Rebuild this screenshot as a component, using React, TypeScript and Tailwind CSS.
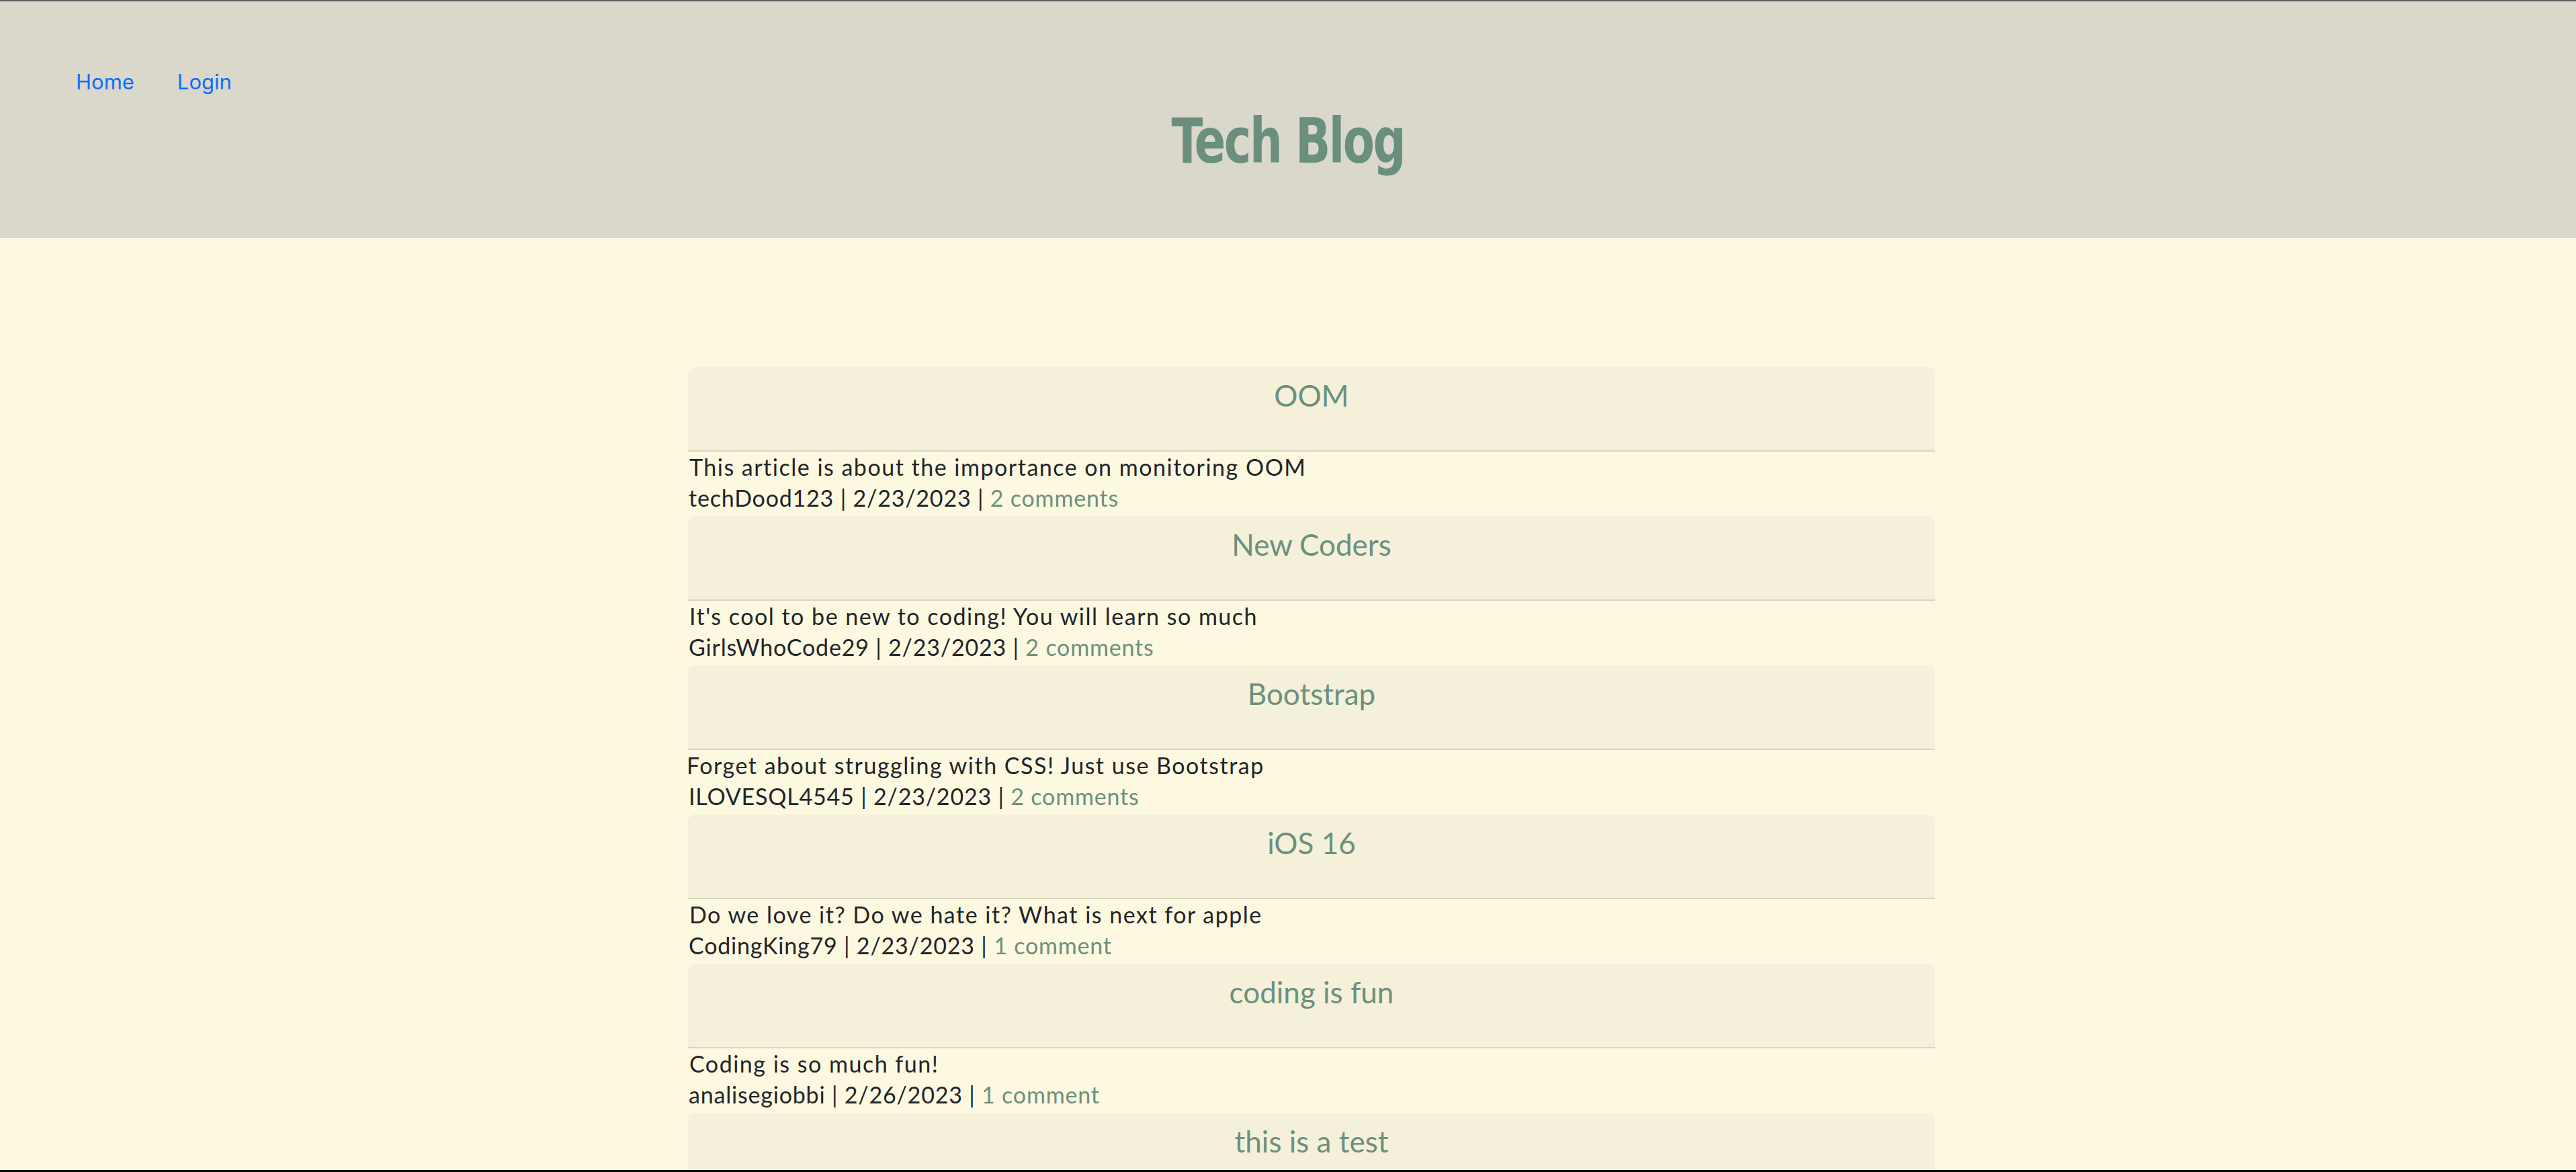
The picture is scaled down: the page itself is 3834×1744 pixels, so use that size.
import React from 'react'

type Post = {
  title: string
  body?: string
  author?: string
  date?: string
  comments?: string
  indent: string
}

const posts: Post[] = [
  {
    title: 'OOM',
    body: 'This article is about the importance on monitoring OOM',
    author: 'techDood123',
    date: '2/23/2023',
    comments: '2 comments',
    indent: 'pl-[1px]',
  },
  {
    title: 'New Coders',
    body: "It's cool to be new to coding! You will learn so much",
    author: 'GirlsWhoCode29',
    date: '2/23/2023',
    comments: '2 comments',
    indent: 'pl-[1px]',
  },
  {
    title: 'Bootstrap',
    body: 'Forget about struggling with CSS! Just use Bootstrap',
    author: 'ILOVESQL4545',
    date: '2/23/2023',
    comments: '2 comments',
    indent: '-ml-[3px]',
  },
  {
    title: 'iOS 16',
    body: 'Do we love it? Do we hate it? What is next for apple',
    author: 'CodingKing79',
    date: '2/23/2023',
    comments: '1 comment',
    indent: 'pl-[1px]',
  },
  {
    title: 'coding is fun',
    body: 'Coding is so much fun!',
    author: 'analisegiobbi',
    date: '2/26/2023',
    comments: '1 comment',
    indent: 'pl-[1px]',
  },
  { title: 'this is a test', indent: 'pl-[1px]' },
]

function PostCard({ post }: { post: Post }) {
  return (
    <article className="mb-[4px]">
      <div className="h-[126px] rounded-t-[10px] border-b-2 border-[#d7d5c0] bg-[#f5f0da] px-[32px] pt-[16px] text-center">
        <h4 className="text-[44px] leading-[1.2] text-[#6b917e]">{post.title}</h4>
      </div>
      {post.body && (
        <div className="pl-[1px] text-[34px] leading-[46px] text-[#212529]">
          <p className={`tracking-[1.5px] ${post.indent}`}>{post.body}</p>
          <p className="tracking-[0.8px]">
            {post.author} | {post.date} |{' '}
            <a href="#" className="text-[#6b917e]">
              {post.comments}
            </a>
          </p>
        </div>
      )}
    </article>
  )
}

export default function App() {
  return (
    <div className="flex h-[1744px] flex-col overflow-hidden border-t-2 border-b-[3px] border-t-[#5f5f5f] border-b-black bg-[#fdf8e0] font-['Lato',sans-serif]">
      <header className="h-[352px] shrink-0 bg-[#dad7cb]">
        <nav className="flex pl-[81px] pt-[80px] font-['Inter','Liberation_Sans',sans-serif] text-[31px] leading-[48px]">
          <a href="#" className="px-[32px] py-[16px] text-[#0d6efd]">
            Home
          </a>
          <a href="#" className="px-[32px] py-[16px] text-[#0d6efd]">
            Login
          </a>
        </nav>
        <div className="-mt-[6px] flex justify-center">
          <h1 className="scale-x-[0.83] font-['DejaVu_Sans_Condensed','DejaVu_Sans',sans-serif] text-[92px] leading-[1.2] font-bold tracking-[-3px] text-[#6a8f7c]">
            Tech Blog
          </h1>
        </div>
      </header>

      <main className="pt-[192px] pl-[1024px]">
        <div className="w-[1856px]">
          {posts.map((post) => (
            <PostCard key={post.title} post={post} />
          ))}
        </div>
      </main>
    </div>
  )
}
